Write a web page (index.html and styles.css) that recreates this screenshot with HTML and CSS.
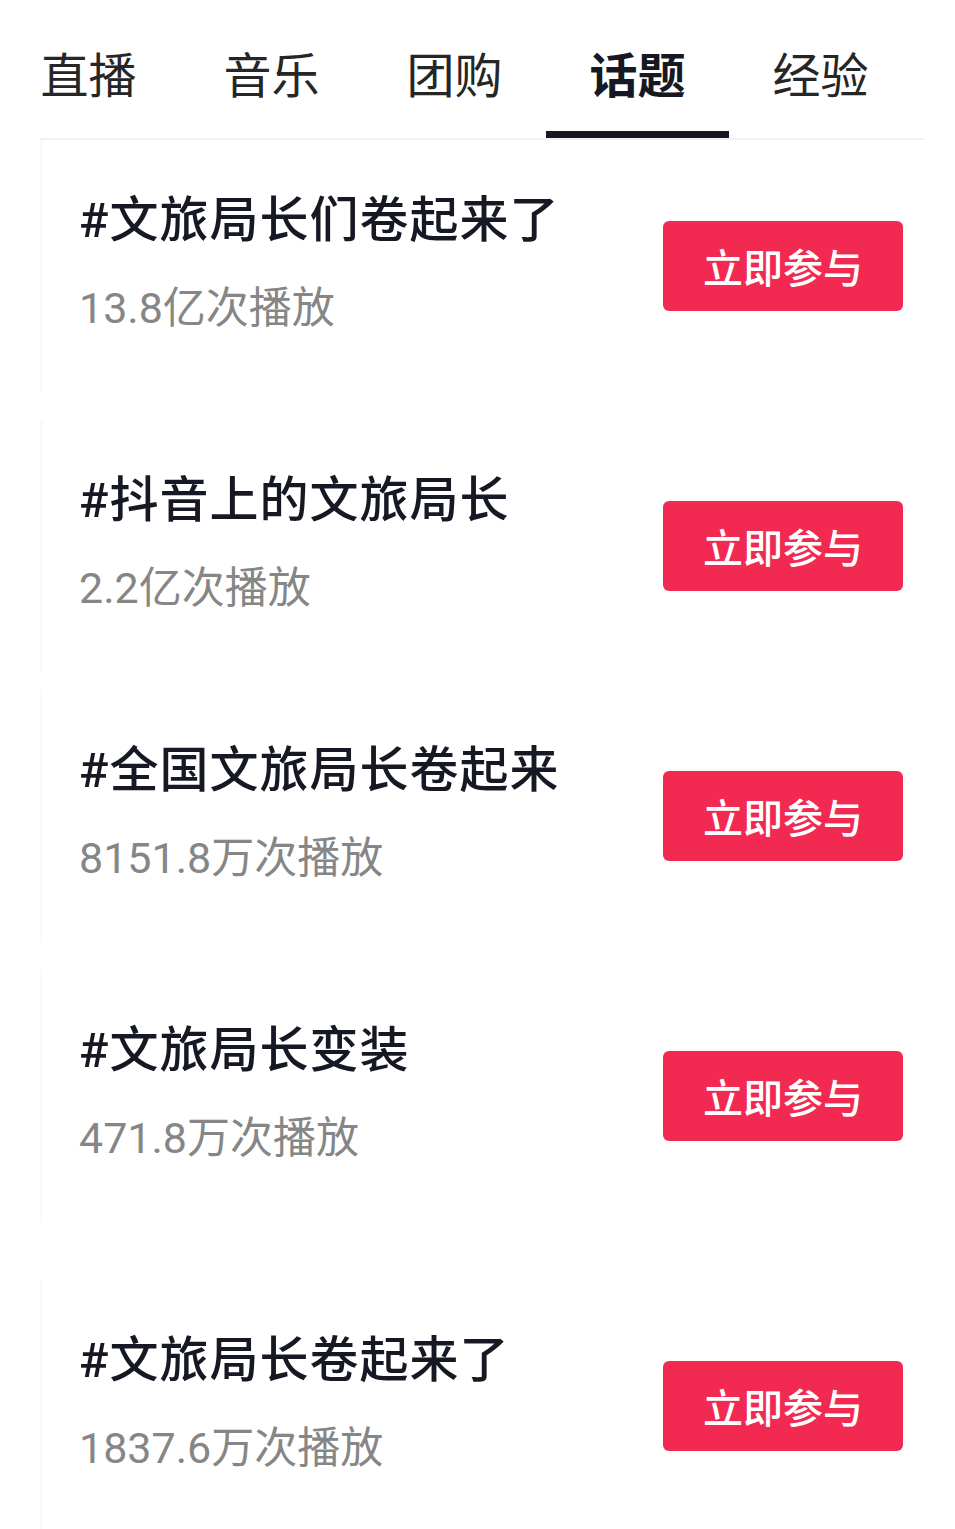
FILE: index.html
```html
<!DOCTYPE html>
<html lang="zh-CN">
<head>
    <meta charset="UTF-8">
    <meta name="viewport" content="width=device-width, initial-scale=1.0">
    <title>话题</title>
    <link rel="stylesheet" href="styles.css">
</head>
<body>
    <nav class="tabs">
        <a class="tab">直播</a>
        <a class="tab">音乐</a>
        <a class="tab">团购</a>
        <a class="tab tab-active">话题</a>
        <a class="tab">经验</a>
    </nav>
    <div class="tabs-rule"></div>

    <ul class="topic-list">
        <li class="topic">
            <div class="topic-info">
                <h3 class="topic-title">#文旅局长们卷起来了</h3>
                <p class="topic-plays">13.8亿次播放</p>
            </div>
            <button class="join-btn">立即参与</button>
        </li>
        <li class="topic">
            <div class="topic-info">
                <h3 class="topic-title">#抖音上的文旅局长</h3>
                <p class="topic-plays">2.2亿次播放</p>
            </div>
            <button class="join-btn">立即参与</button>
        </li>
        <li class="topic topic-tight">
            <div class="topic-info">
                <h3 class="topic-title">#全国文旅局长卷起来</h3>
                <p class="topic-plays">8151.8万次播放</p>
            </div>
            <button class="join-btn">立即参与</button>
        </li>
        <li class="topic">
            <div class="topic-info">
                <h3 class="topic-title">#文旅局长变装</h3>
                <p class="topic-plays">471.8万次播放</p>
            </div>
            <button class="join-btn">立即参与</button>
        </li>
        <li class="topic topic-loose">
            <div class="topic-info">
                <h3 class="topic-title">#文旅局长卷起来了</h3>
                <p class="topic-plays">1837.6万次播放</p>
            </div>
            <button class="join-btn">立即参与</button>
        </li>
    </ul>
</body>
</html>
```

FILE: styles.css
```css
* {
    margin: 0;
    padding: 0;
    box-sizing: border-box;
}

body {
    font-family: Roboto, "Noto Sans CJK SC", sans-serif;
    color: #161823;
    background-color: #fff;
}

/* Tab bar */
.tabs {
    display: flex;
    margin-left: -3px;
}

.tab {
    width: 183px;
    padding-top: 53px;
    height: 138px;
    font-size: 48px;
    line-height: 48px;
    text-align: center;
    color: #262626;
    border-bottom: 7px solid transparent;
}

.tab-active {
    font-weight: 700;
    color: #161823;
    border-bottom-color: #161823;
}

.tabs-rule {
    height: 2px;
    margin: 0 30px 0 40px;
    background: #f2f2f2;
}

/* Topic rows */
.topic-list {
    list-style: none;
    margin: 0 30px 0 40px;
}

.topic {
    display: flex;
    align-items: center;
    justify-content: space-between;
    height: 252px;
    margin-top: 28px;
    padding-left: 36px;
    border-left: 3px solid #fbfbf6;
}

.topic:first-child {
    margin-top: 0;
}

.topic-tight {
    margin-top: 18px;
}

.topic-loose {
    margin-top: 58px;
}

.topic-info {
    display: flex;
    flex-direction: column;
    gap: 42px;
    padding-bottom: 6px;
}

.topic-title {
    font-size: 49px;
    line-height: 49px;
    letter-spacing: 1px;
    font-weight: 500;
    color: #161823;
}

.topic-plays {
    font-size: 43px;
    line-height: 43px;
    color: #868686;
}

.join-btn {
    width: 240px;
    height: 90px;
    margin-right: 22px;
    border: none;
    border-radius: 6px;
    background: #f22a52;
    color: #fff;
    font-family: inherit;
    font-size: 40px;
    font-weight: 500;
}
```
